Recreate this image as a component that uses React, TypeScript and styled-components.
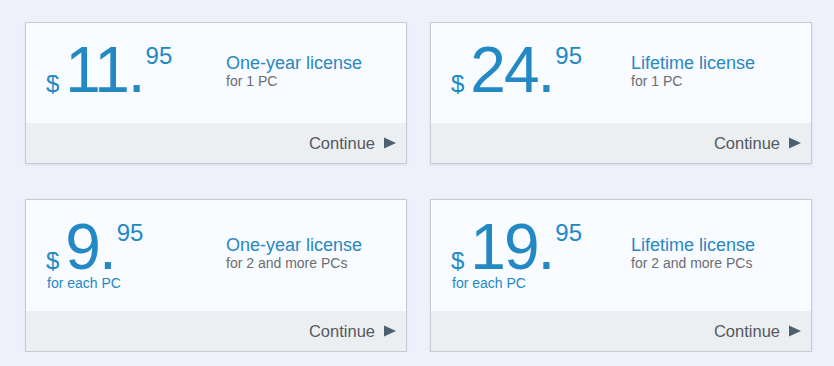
import styled, { createGlobalStyle } from 'styled-components';

const GlobalStyle = createGlobalStyle`
	html, body {
		margin: 0;
		background: #eff0fc;
		font-family: 'Liberation Sans', Arial, sans-serif;
	}
`;

const Grid = styled.main`
	display: grid;
	grid-template-columns: repeat(2, 382px);
	column-gap: 23px;
	row-gap: 35px;
	align-items: start;
	padding: 22px 0 0 25px;
`;

const Card = styled.section`
	box-sizing: border-box;
	display: flex;
	flex-direction: column;
	border: 1px solid #c9cbd2;
	box-shadow: 0 1px 2px rgba(120, 125, 150, 0.18);
	background: #f8fbff;
`;

const Body = styled.div`
	box-sizing: border-box;
	min-height: 100px;
	display: grid;
	grid-template-columns: 180px 1fr;
	align-items: center;
	padding: 19px 10px 20px 20px;
`;

const Price = styled.div`
	align-self: start;
	color: #2389c4;
`;

const Amount = styled.div`
	display: flex;
	align-items: baseline;
	height: 56px;
	line-height: 56px;
	white-space: nowrap;
`;

const Currency = styled.span`
	font-size: 24px;
	margin-right: 6px;
`;

const Whole = styled.span`
	font-size: 64px;
	letter-spacing: -2px;
`;

const Cents = styled.span`
	align-self: flex-start;
	margin-left: 2px;
	padding-top: 2px;
	font-size: 24px;
	line-height: 24px;
`;

const Note = styled.div`
	font-size: 14px;
	line-height: 16px;
	margin-left: 1px;
`;

const Info = styled.div`
	margin-bottom: 4px;
`;

const Title = styled.h2`
	margin: 0;
	font-size: 18px;
	font-weight: 400;
	line-height: 20px;
	color: #2a87c2;
`;

const Subtitle = styled.p`
	margin: 0;
	font-size: 14px;
	line-height: 16px;
	color: #6a6d72;
`;

const Footer = styled.footer`
	height: 40px;
	display: flex;
	align-items: center;
	justify-content: flex-end;
	padding-right: 10px;
	background: #ebeff2;
	font-size: 16.5px;
	color: #56595e;
`;

const Arrow = styled.svg`
	margin-left: 9px;
	fill: #4d6070;
`;

interface Plan {
	whole: string;
	cents: string;
	title: string;
	subtitle: string;
	perUnit?: boolean;
}

const plans: Plan[] = [
	{ whole: '11.', cents: '95', title: 'One-year license', subtitle: 'for 1 PC' },
	{ whole: '24.', cents: '95', title: 'Lifetime license', subtitle: 'for 1 PC' },
	{ whole: '9.', cents: '95', title: 'One-year license', subtitle: 'for 2 and more PCs', perUnit: true },
	{ whole: '19.', cents: '95', title: 'Lifetime license', subtitle: 'for 2 and more PCs', perUnit: true },
];

const App = () => (
	<>
		<GlobalStyle />
		<Grid>
			{plans.map((plan, index) => (
				<Card key={index}>
					<Body>
						<Price>
							<Amount>
								<Currency>$</Currency>
								<Whole>{plan.whole}</Whole>
								<Cents>{plan.cents}</Cents>
							</Amount>
							{plan.perUnit && <Note>for each PC</Note>}
						</Price>
						<Info>
							<Title>{plan.title}</Title>
							<Subtitle>{plan.subtitle}</Subtitle>
						</Info>
					</Body>
					<Footer>
						Continue
						<Arrow width='12' height='12' viewBox='0 0 12 12'>
							<polygon points='0,0.5 12,6 0,11.5' />
						</Arrow>
					</Footer>
				</Card>
			))}
		</Grid>
	</>
);

export default App;
